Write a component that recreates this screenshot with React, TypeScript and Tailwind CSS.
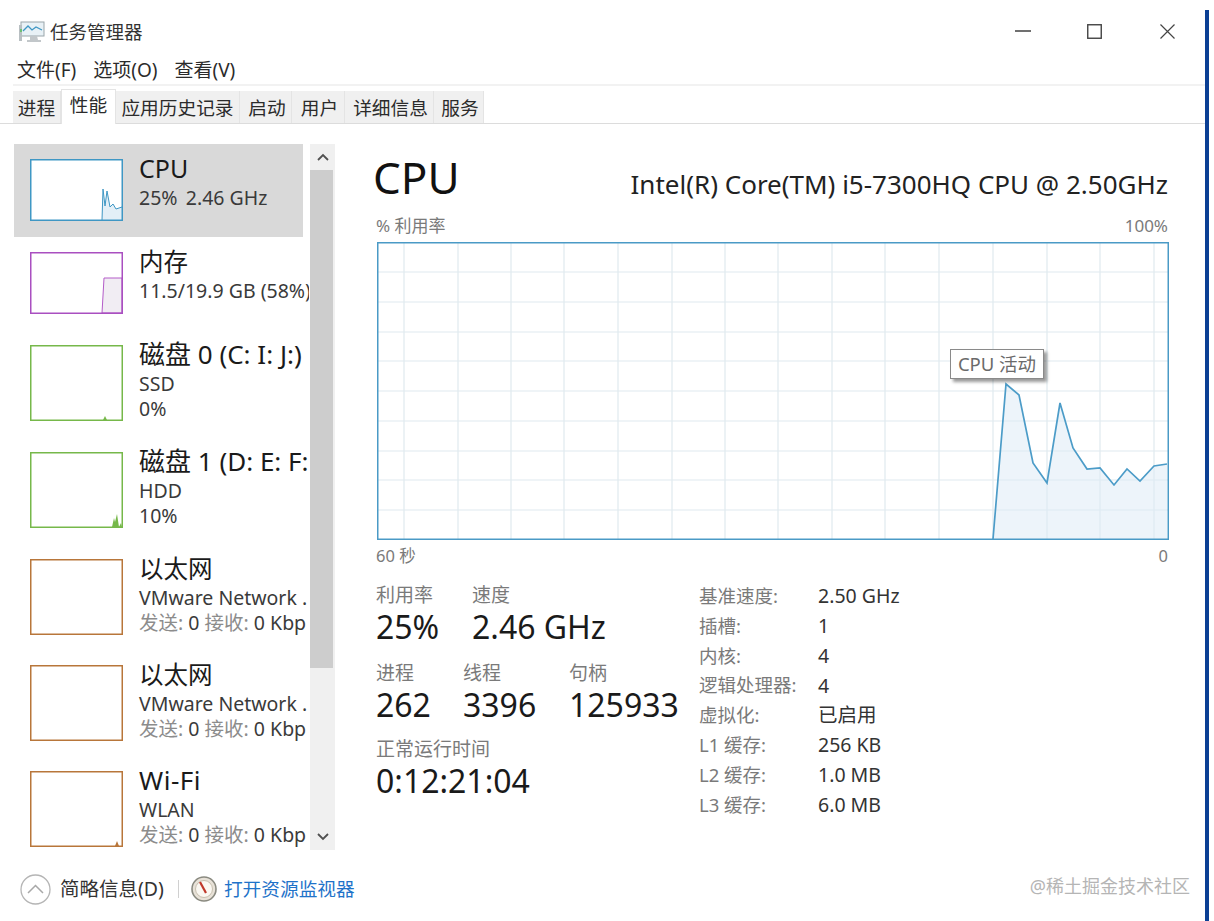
const font = { fontFamily: '"Noto Sans", "Noto Sans CJK SC", sans-serif' };

const tabs = [
  { label: "进程", w: "w-[48px]" },
  { label: "性能", w: "w-[55px]", active: true },
  { label: "应用历史记录", w: "w-[124px]" },
  { label: "启动", w: "w-[52px] pl-[3px]" },
  { label: "用户", w: "w-[53px] pl-[3px]" },
  { label: "详细信息", w: "w-[89px] pl-[3px]" },
  { label: "服务", w: "w-[50px] pl-[3px]" },
];

const cpuPoints =
  "616,297 629,142 642,153 656,221 670,241 683,161 696,206 710,227 723,226 737,243 750,227 763,239 777,224 790,222";

function Thumb({ color, tall, children }: { color: string; tall?: boolean; children?: React.ReactNode }) {
  return (
    <svg width="93" height={tall ? 76 : 62} viewBox={`0 0 93 ${tall ? 76 : 62}`} className="shrink-0 block">
      <rect x="0.5" y="0.5" width="92" height={tall ? 75 : 61} fill="#fff" />
      {children}
      <rect x="0.75" y="0.75" width="91.5" height={tall ? 74.5 : 60.5} fill="none" stroke={color} strokeWidth="1.5" />
    </svg>
  );
}

function NetLine() {
  return (
    <>
      <span className="text-[#8c8c8c]">发送:</span> 0 <span className="text-[#8c8c8c]">接收:</span> 0 Kbp
    </>
  );
}

function SideRow({
  selected,
  rowClass,
  thumb,
  title,
  titleClass,
  lines,
}: {
  selected?: boolean;
  rowClass: string;
  thumb: React.ReactNode;
  title: string;
  titleClass: string;
  lines: React.ReactNode[];
}) {
  return (
    <div
      className={`flex pl-[16px] pt-[15px] overflow-hidden whitespace-nowrap ${rowClass} ${
        selected ? "bg-[#d9d9d9] w-[289px]" : ""
      }`}
    >
      {thumb}
      <div className="ml-[16px] mt-[-7px]">
        <div className={`${titleClass} leading-[33px] text-[#1a1a1a]`}>{title}</div>
        {lines.map((l, i) => (
          <div key={i} className="text-[19.5px] leading-[25px] text-[#3a3a3a]">
            {l}
          </div>
        ))}
      </div>
    </div>
  );
}

function Stat({ label, value, className }: { label: string; value: string; className: string }) {
  return (
    <div className={className}>
      <div className="text-[19px] leading-[24px] text-[#7a7a7a]">{label}</div>
      <div className="text-[32px] leading-[40px] text-[#1a1a1a] whitespace-nowrap">{value}</div>
    </div>
  );
}

const specs = [
  ["基准速度:", "2.50 GHz"],
  ["插槽:", "1"],
  ["内核:", "4"],
  ["逻辑处理器:", "4"],
  ["虚拟化:", "已启用"],
  ["L1 缓存:", "256 KB"],
  ["L2 缓存:", "1.0 MB"],
  ["L3 缓存:", "6.0 MB"],
];

function UsageChart() {
  const vx = [27, 81, 134, 187, 241, 295, 348, 401, 455, 508, 562, 616, 670, 723, 777];
  const hy = [30, 60, 90, 119, 149, 179, 209, 238, 268];
  return (
    <svg width="792" height="298" viewBox="0 0 792 298" className="block">
      {vx.map((x) => (
        <line key={x} x1={x} y1="0" x2={x} y2="298" stroke="#dfe9ef" strokeWidth="1.2" />
      ))}
      {hy.map((y) => (
        <line key={y} x1="0" y1={y} x2="792" y2={y} stroke="#dfe9ef" strokeWidth="1.2" />
      ))}
      <polygon points={`${cpuPoints} 790,297`} fill="#dceaf6" fillOpacity="0.5" />
      <polyline points={cpuPoints} fill="none" stroke="#4c9cc8" strokeWidth="1.7" />
      <rect x="0.75" y="0.75" width="790.5" height="296.5" fill="none" stroke="#4a9ac6" strokeWidth="1.5" />
    </svg>
  );
}

export default function App() {
  return (
    <div className="flex w-[1214px] h-[921px] bg-white overflow-hidden" style={font}>
      <div className="w-[1205px] flex flex-col">
        {/* title bar */}
        <div className="h-[50px] flex items-center pl-[19px] pt-[14px]">
          <svg width="26" height="22" viewBox="0 0 26 22" className="shrink-0">
            <rect x="2" y="1" width="23" height="14" fill="#e8f1f6" stroke="#9aa5aa" />
            <path d="M4 10 L9 5 L13 9 L17 6 L23 9" fill="none" stroke="#3f97c4" strokeWidth="1.3" />
            <rect x="0" y="4" width="3" height="16" fill="#b8bfc2" />
            <rect x="1" y="8" width="2" height="3" fill="#6fbf73" />
            <path d="M11 15 h7 l1 4 h3 v2 h-14 v-2 h3 z" fill="#c2c7ca" />
          </svg>
          <span className="ml-[5px] text-[18.5px] leading-[24px] text-[#333]">任务管理器</span>
          <div className="ml-auto flex items-center pr-[30px] mt-[-2px]">
            <svg width="16" height="15" viewBox="0 0 16 15" className="mr-[56px]">
              <line x1="0" y1="7" x2="16" y2="7" stroke="#222" strokeWidth="1.3" />
            </svg>
            <svg width="15" height="15" viewBox="0 0 15 15" className="mr-[58px]">
              <rect x="0.75" y="0.75" width="13.5" height="13.5" fill="none" stroke="#444" strokeWidth="1.4" />
            </svg>
            <svg width="15" height="15" viewBox="0 0 15 15">
              <path d="M0.5 0.5 L14.5 14.5 M14.5 0.5 L0.5 14.5" stroke="#444" strokeWidth="1.2" />
            </svg>
          </div>
        </div>

        {/* menu */}
        <div className="h-[36px] ml-[13px] flex items-center gap-[17px] pl-[4px] pt-[6px] border-b-2 border-[#f2f2f2] text-[19px] text-[#2b2b2b]">
          <span>文件(F)</span>
          <span>选项(O)</span>
          <span>查看(V)</span>
        </div>

        {/* tabs */}
        <div className="h-[38px] pl-[13px] flex items-end border-b border-[#dcdcdc]">
          {tabs.map((t) => (
            <div
              key={t.label}
              className={`${t.w} text-center text-[18.7px] leading-[24px] text-[#2b2b2b] border-r border-[#e4e4e4] whitespace-nowrap ${
                t.active
                  ? "h-[35px] pt-[3px] mb-[-1px] bg-white border-l border-t border-[#dcdcdc]"
                  : "h-[32px] pt-[5px] bg-[#f0f0f0]"
              }`}
            >
              {t.label}
            </div>
          ))}
        </div>

        {/* body */}
        <div className="flex pt-[20px] h-[749px]">
          <div className="ml-[14px] w-[295px] h-[706px] overflow-hidden">
            <SideRow
              selected
              rowClass="h-[93px]"
              title="CPU"
              titleClass="text-[25px]"
              lines={["25% \u20092.46 GHz"]}
              thumb={
                <Thumb color="#3f97c4">
                  <polygon points="72,61 73,30 75,47 77,32 80,48 83,45 86,50 92,48 92,61" fill="#e3eff7" />
                  <polyline points="72,61 73,30 75,47 77,32 80,48 83,45 86,50 92,48" fill="none" stroke="#3f97c4" />
                </Thumb>
              }
            />
            <SideRow
              rowClass="h-[93px]"
              title="内存"
              titleClass="text-[24.5px]"
              lines={["11.5/19.9 GB (58%)"]}
              thumb={
                <Thumb color="#a94fc0">
                  <polygon points="72,61 74,26 92,26 92,61" fill="#f1edf3" stroke="#b45cc9" />
                </Thumb>
              }
            />
            <SideRow
              rowClass="h-[107px]"
              title="磁盘 0 (C: I: J:)"
              titleClass="text-[26px]"
              lines={["SSD", "0%"]}
              thumb={
                <Thumb tall color="#76b84a">
                  <polygon points="73,75 75,71 77,75" fill="#76b84a" />
                </Thumb>
              }
            />
            <SideRow
              rowClass="h-[107px]"
              title="磁盘 1 (D: E: F:"
              titleClass="text-[26px]"
              lines={["HDD", "10%"]}
              thumb={
                <Thumb tall color="#76b84a">
                  <polygon points="82,75 84,66 85,70 87,62 89,75 91,71 92,75" fill="#76b84a" />
                </Thumb>
              }
            />
            <SideRow
              rowClass="h-[106px]"
              title="以太网"
              titleClass="text-[24.5px]"
              lines={["VMware Network .", <NetLine key="n" />]}
              thumb={<Thumb tall color="#b8763a" />}
            />
            <SideRow
              rowClass="h-[106px]"
              title="以太网"
              titleClass="text-[24.5px]"
              lines={["VMware Network .", <NetLine key="n" />]}
              thumb={<Thumb tall color="#b8763a" />}
            />
            <SideRow
              rowClass="h-[94px]"
              title="Wi-Fi"
              titleClass="text-[26px] tracking-[0.5px]"
              lines={["WLAN", <NetLine key="n" />]}
              thumb={
                <Thumb tall color="#b8763a">
                  <polygon points="85,75 87,70 89,75" fill="#b8763a" />
                </Thumb>
              }
            />
          </div>

          {/* scrollbar */}
          <div className="ml-[1px] w-[25px] h-[706px] bg-[#f0f0f0] flex flex-col">
            <div className="h-[26px] flex items-center justify-center">
              <svg width="12" height="8" viewBox="0 0 12 8">
                <path d="M1 7 L6 2 L11 7" fill="none" stroke="#505050" strokeWidth="1.8" />
              </svg>
            </div>
            <div className="w-[23px] h-[498px] bg-[#cdcdcd]" />
            <div className="mt-auto h-[26px] flex items-center justify-center">
              <svg width="12" height="8" viewBox="0 0 12 8">
                <path d="M1 1 L6 6 L11 1" fill="none" stroke="#505050" strokeWidth="1.8" />
              </svg>
            </div>
          </div>

          {/* main panel */}
          <div className="ml-[38px] w-[795px]">
            <div className="flex items-end justify-between h-[66px]">
              <div className="text-[44px] leading-[66px] text-[#111]">CPU</div>
              <div className="text-[26px] leading-[40px] mb-[6px] text-[#222] whitespace-nowrap">
                Intel(R) Core(TM) i5-7300HQ CPU @ 2.50GHz
              </div>
            </div>
            <div className="flex justify-between pl-[3px] h-[32px] pt-[4px] text-[17px] leading-[24px] text-[#7a7a7a]">
              <span>% 利用率</span>
              <span>100%</span>
            </div>
            <div className="relative ml-[4px] w-[792px]">
              <UsageChart />
              <div className="absolute left-[573px] top-[107px] w-[94px] h-[30px] bg-white border border-[#8a8a8a] shadow-[3px_3px_3px_rgba(0,0,0,0.4)] text-center text-[18.5px] leading-[28px] text-[#6a6a6a] whitespace-nowrap">
                CPU 活动
              </div>
            </div>
            <div className="flex justify-between pl-[3px] h-[30px] pt-[4px] text-[16.5px] leading-[24px] text-[#7a7a7a]">
              <span>60 秒</span>
              <span>0</span>
            </div>

            <div className="flex pl-[3px] pt-[13px]">
              <div className="w-[323px]">
                <div className="flex">
                  <Stat label="利用率" value="25%" className="w-[96px]" />
                  <Stat label="速度" value="2.46 GHz" className="" />
                </div>
                <div className="flex mt-[14px]">
                  <Stat label="进程" value="262" className="w-[87px]" />
                  <Stat label="线程" value="3396" className="w-[106px]" />
                  <Stat label="句柄" value="125933" className="" />
                </div>
                <div className="mt-[12px]">
                  <Stat label="正常运行时间" value="0:12:21:04" className="" />
                </div>
              </div>
              <div className="flex flex-col mt-[-2px]">
                {specs.map(([k, v]) => (
                  <div key={k} className="flex h-[29.8px] items-center whitespace-nowrap">
                    <span className="w-[119px] text-[18.5px] text-[#7a7a7a]">{k}</span>
                    <span className="text-[19.5px] text-[#333]">{v}</span>
                  </div>
                ))}
              </div>
            </div>
          </div>
        </div>

        {/* footer */}
        <div className="flex items-center pl-[20px] h-[32px]">
          <svg width="31" height="31" viewBox="0 0 31 31" className="shrink-0">
            <circle cx="15.5" cy="15.5" r="14.5" fill="none" stroke="#b5b5b5" strokeWidth="1.3" />
            <path d="M8 19 L15.5 11.5 L23 19" fill="none" stroke="#a8a8a8" strokeWidth="1.5" />
          </svg>
          <span className="ml-[9px] text-[19.5px] leading-[24px] text-[#333]">简略信息(D)</span>
          <div className="ml-[14px] w-px h-[18px] bg-[#d0d0d0]" />
          <svg width="26" height="26" viewBox="0 0 26 26" className="ml-[12px] shrink-0">
            <circle cx="13" cy="13" r="12" fill="#e8e2d8" stroke="#8a8a80" strokeWidth="1.6" />
            <circle cx="13" cy="13" r="8.5" fill="#fbf8f2" stroke="#c8c0b0" />
            <path d="M9 6 L15 17" stroke="#c0392b" strokeWidth="2.2" />
          </svg>
          <span className="ml-[7px] text-[18.7px] leading-[24px] text-[#1f73c9]">打开资源监视器</span>
          <span className="ml-auto mr-[15px] mb-[6px] text-[18px] leading-[24px] text-[#b5b5b5]">@稀土掘金技术社区</span>
        </div>
      </div>
      <div className="mt-[10px] w-[4px] h-[911px] bg-[#0b3f94]" />
    </div>
  );
}
